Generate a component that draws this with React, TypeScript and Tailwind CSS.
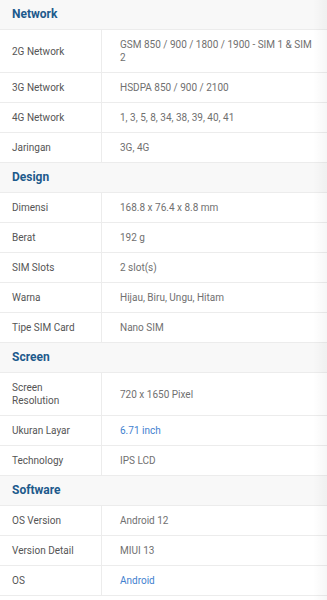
import React from "react";

type Row = { label: string; value: string; link?: boolean };
type Section = { title: string; rows: Row[] };

const data: Section[] = [
  {
    title: "Network",
    rows: [
      { label: "2G Network", value: "GSM 850 / 900 / 1800 / 1900 - SIM 1 & SIM 2" },
      { label: "3G Network", value: "HSDPA 850 / 900 / 2100" },
      { label: "4G Network", value: "1, 3, 5, 8, 34, 38, 39, 40, 41" },
      { label: "Jaringan", value: "3G, 4G" },
    ],
  },
  {
    title: "Design",
    rows: [
      { label: "Dimensi", value: "168.8 x 76.4 x 8.8 mm" },
      { label: "Berat", value: "192 g" },
      { label: "SIM Slots", value: "2 slot(s)" },
      { label: "Warna", value: "Hijau, Biru, Ungu, Hitam" },
      { label: "Tipe SIM Card", value: "Nano SIM" },
    ],
  },
  {
    title: "Screen",
    rows: [
      { label: "Screen Resolution", value: "720 x 1650 Pixel" },
      { label: "Ukuran Layar", value: "6.71 inch", link: true },
      { label: "Technology", value: "IPS LCD" },
    ],
  },
  {
    title: "Software",
    rows: [
      { label: "OS Version", value: "Android 12" },
      { label: "Version Detail", value: "MIUI 13" },
      { label: "OS", value: "Android", link: true },
    ],
  },
];

export default function App() {
  return (
    <div
      className="relative w-[327px] h-[600px] overflow-hidden bg-white"
      style={{ fontFamily: "Roboto, 'Liberation Sans', sans-serif" }}
    >
      <div className="flex flex-col">
        {data.map((s) => (
          <div key={s.title} className="flex flex-col">
            <div className="bg-[#f8f8f8] border-b border-[#ececec] px-3 py-[7px] text-[12px] leading-[15px] font-bold text-[#1d5a8c]">
              {s.title}
            </div>
            {s.rows.map((r) => (
              <div key={r.label} className="flex border-b border-[#ececec] bg-white">
                <div className="w-[102px] shrink-0 border-r border-[#ececec] pl-3 pr-4 py-2 flex items-center text-[10px] leading-[13px] text-[#555]">
                  {r.label}
                </div>
                <div
                  className={
                    "flex-1 pl-[18px] pr-3 py-2 flex items-center text-[10px] leading-[13px] " +
                    (r.link ? "text-[#3f7fcf]" : "text-[#707070]")
                  }
                >
                  {r.value}
                </div>
              </div>
            ))}
          </div>
        ))}
      </div>
      <div className="absolute top-0 right-0 h-full w-[14px] bg-gradient-to-r from-transparent to-[rgba(0,0,0,0.035)] pointer-events-none" />
    </div>
  );
}
